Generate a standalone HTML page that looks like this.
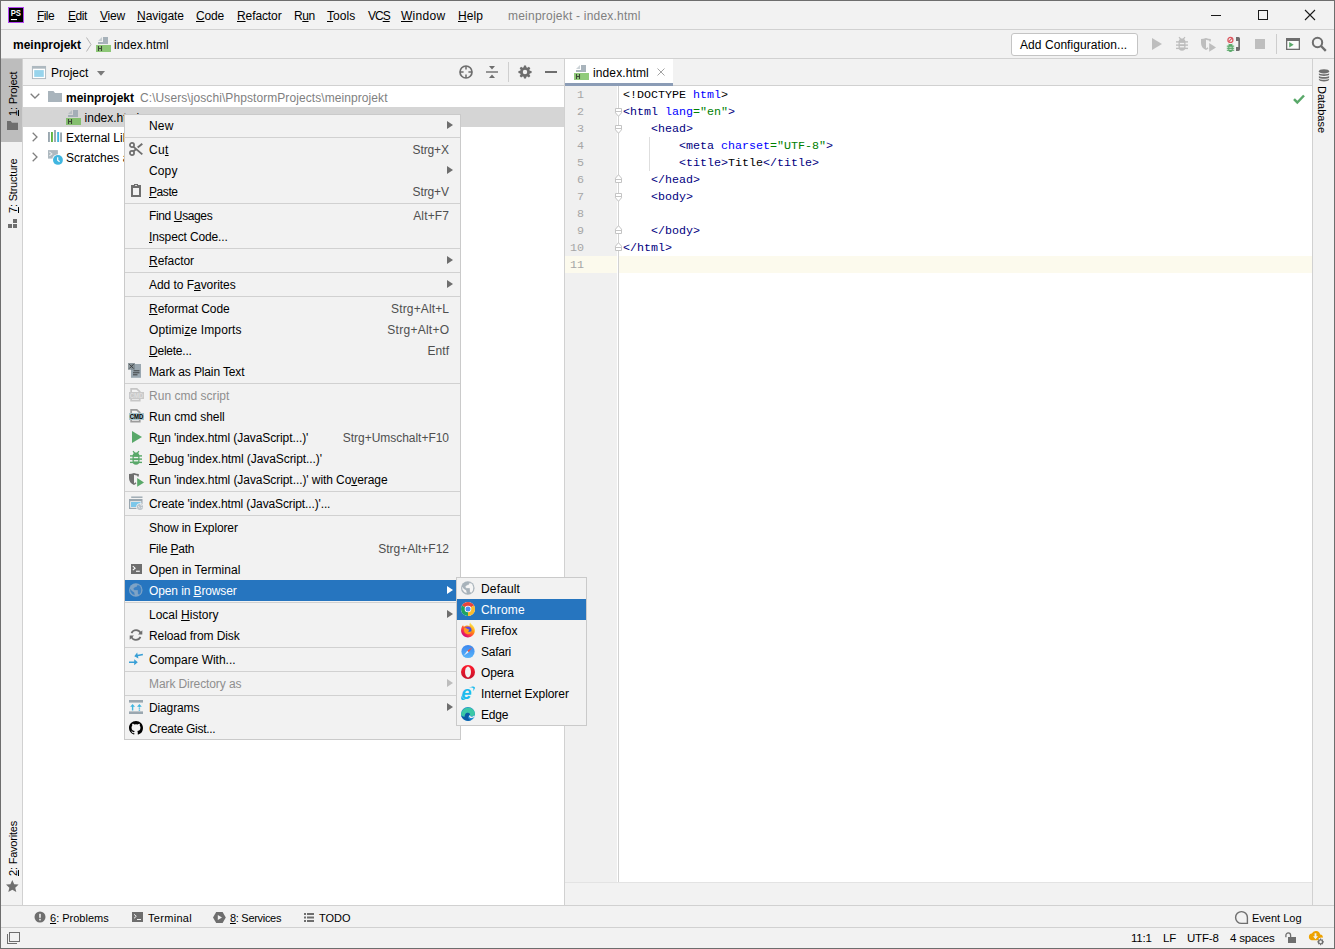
<!DOCTYPE html>
<html lang="en">
<head>
<meta charset="UTF-8">
<title>meinprojekt - index.html</title>
<style>
*{box-sizing:border-box;margin:0;padding:0}
html,body{width:1335px;height:949px;overflow:hidden;background:#f2f2f2}
body{font-family:"Liberation Sans",sans-serif;font-size:12px;color:#000;position:relative}
.a{position:absolute}
.t{position:absolute;white-space:pre;line-height:16px;height:16px}
u{text-decoration:underline;text-underline-offset:1px;text-decoration-thickness:1px}
svg{position:absolute;overflow:visible}
.hl{position:absolute;height:1px;background:#d1d1d1}
.vl{position:absolute;width:1px;background:#d1d1d1}
.menu{position:absolute;background:#f2f2f2;border:1px solid #cacaca}
.mi{position:absolute;left:0;height:21px;width:100%}
.mi .lb{position:absolute;left:24px;top:1px;letter-spacing:-.1px;line-height:21px;white-space:pre}
.mi .sc{position:absolute;right:11px;top:1px;letter-spacing:-.08px;line-height:21px;white-space:pre;color:#4f4f4f}
.mi.dis .lb{color:#8f8f8f}
.mi.sel{background:#2675bf}
.mi.sel .lb{color:#fff}
.sep{position:absolute;left:0;width:100%;height:1px;background:#d1d1d1}
.arr{position:absolute;right:7px;top:6px;width:0;height:0;border-left:6px solid #6e6e6e;border-top:4.5px solid transparent;border-bottom:4.5px solid transparent}
.mi.sel .arr{border-left-color:#fff}
.mi.dis .arr{border-left-color:#bdbdbd}
.mi svg{left:3px;top:2px}
.code{position:absolute;left:623px;font-family:"Liberation Mono",monospace;font-size:11.667px;line-height:17px;height:17px;white-space:pre;color:#000}
.ln{position:absolute;left:566px;width:26px;text-align:right;font-family:"Liberation Mono",monospace;font-size:11.667px;line-height:17px;height:17px;color:#a6a6a6}
.k{color:#000080}.at{color:#0000ff}.s{color:#008000}
.vt{position:absolute;white-space:pre;font-size:11px;line-height:14px;height:14px;transform-origin:0 0}
#frame{left:0;top:0;width:1335px;height:949px;border:1px solid #6e6e6e;z-index:50}
</style>
</head>
<body>
<svg width="16" height="16" viewBox="0 0 16 16" style="left:8px;top:7px"><rect width="16" height="16" fill="#b445f3"/><rect x="1" y="1" width="14" height="14" fill="#000"/><rect x="2.900" y="12" width="6.100" height="1.100" fill="#fff"/><text x="2.700" y="9.100" font-family="Liberation Sans" font-weight="700" font-size="8.600" textLength="10.300" lengthAdjust="spacingAndGlyphs" fill="#fff">PS</text></svg>
<div class="t" style="left:37px;top:8px;letter-spacing:-0.58px"><u>F</u>ile</div>
<div class="t" style="left:68px;top:8px;letter-spacing:-0.42px"><u>E</u>dit</div>
<div class="t" style="left:100px;top:8px;letter-spacing:-0.2px"><u>V</u>iew</div>
<div class="t" style="left:137px;top:8px;letter-spacing:-0.05px"><u>N</u>avigate</div>
<div class="t" style="left:196px;top:8px;letter-spacing:-0.17px"><u>C</u>ode</div>
<div class="t" style="left:237px;top:8px;letter-spacing:-0.1px"><u>R</u>efactor</div>
<div class="t" style="left:294px;top:8px;letter-spacing:-0.4px">R<u>u</u>n</div>
<div class="t" style="left:327px;top:8px;letter-spacing:0.08px"><u>T</u>ools</div>
<div class="t" style="left:368px;top:8px;letter-spacing:-1.0px">VC<u>S</u></div>
<div class="t" style="left:401px;top:8px;letter-spacing:0.27px"><u>W</u>indow</div>
<div class="t" style="left:458px;top:8px;letter-spacing:0.08px"><u>H</u>elp</div>
<div class="t" style="left:508px;top:8px;color:#7f7f7f;letter-spacing:.22px">meinprojekt - index.html</div>
<div class="a" style="left:1211px;top:15px;width:10px;height:1px;background:#1a1a1a;"></div>
<div class="a" style="left:1258px;top:10px;width:10px;height:10px;border:1px solid #1a1a1a"></div>
<svg width="10" height="10" viewBox="0 0 10 10" style="left:1305px;top:10px"><path d="M0 0L10 10M10 0L0 10" stroke="#1a1a1a" stroke-width="1.100"/></svg>
<div class="hl" style="left:1px;top:29px;width:1333px;background:#d1d1d1"></div>
<div class="t" style="left:13px;top:37px;font-weight:700">meinprojekt</div>
<svg width="6" height="15" viewBox="0 0 6 15" style="left:86px;top:37px"><path d="M.5 .5L5 7.500.5 14.500" fill="none" stroke="#b4b4b4" stroke-width="1"/></svg>
<svg width="16" height="16" viewBox="0 0 16 16" style="left:95px;top:36px"><path d="M8 1h5v7H3V6h5z" fill="#9aa7b0" opacity=".85"/><path d="M7 1v4H3z" fill="#9aa7b0" opacity=".5"/><rect x="1" y="9" width="15" height="7" fill="#62b543" opacity=".7"/><path d="M3.500 10v5M6.500 10v5M3.500 12.500h3" stroke="#231f20" stroke-opacity=".75" stroke-width="1.100" fill="none"/></svg>
<div class="t" style="left:114px;top:37px;">index.html</div>
<div class="a" style="left:1011px;top:33px;width:127px;height:23px;border:1px solid #c4c4c4;border-radius:3px;background:#fff"></div>
<div class="t" style="left:1020px;top:37px;letter-spacing:.06px">Add Configuration...</div>
<svg width="16" height="16" viewBox="0 0 16 16" style="left:1148px;top:36px"><polygon fill="#bebebe" points="4,2 14,8 4,14"/></svg>
<svg width="16" height="16" viewBox="0 0 16 16" style="left:1174px;top:36px"><g fill="#bebebe"><path d="M4.500 6.400a3.500 3.800 0 0 1 7 0v4.500a3.500 3.800 0 0 1-7 0z"/><rect x="2" y="5.200" width="12" height="1.400"/><rect x="2" y="8.400" width="12" height="1.400"/><rect x="2" y="11.700" width="12" height="1.400"/></g><path d="M5 1.200l2 2.300M11 1.200L9 3.500" stroke="#bebebe" stroke-width="1.200"/><rect x="5.800" y="6.900" width="4.400" height="1.300" fill="#f2f2f2"/><rect x="5.800" y="10.100" width="4.400" height="1.300" fill="#f2f2f2"/></svg>
<svg width="16" height="16" viewBox="0 0 16 16" style="left:1200px;top:36px"><g fill="#bebebe"><path d="M1 3Q3.500 3 6 2V14Q1 12 1 7z"/><path d="M6 2Q8.500 3 10.800 3V5.600H9.300V4.400Q7.500 4.300 6 3.700z"/><path d="M6 14Q7.500 13.400 8.400 12.300L7.400 11.300Q6.700 12.100 6 12.400z"/></g><polygon fill="#bebebe" points="9.200,7 16,11.400 9.200,15.700"/></svg>
<svg width="16" height="16" viewBox="0 0 16 16" style="left:1225px;top:36px"><path d="M11 1h2.500Q15 1 15 2.800V13.200Q15 15 13.500 15H11V11h2.300V5H11z" fill="#6e6e6e"/><circle cx="5.400" cy="3.900" r="2.500" fill="none" stroke="#db5860" stroke-width="1.300"/><path d="M3.700 5.600L7.100 2.200" stroke="#db5860" stroke-width="1.200"/><g fill="#59a869"><path d="M3.300 10.200a2.200 2.300 0 0 1 4.400 0v3.200a2.200 2.500 0 0 1-4.400 0z"/><rect x="1.800" y="9.600" width="7.400" height="1.100"/><rect x="1.800" y="11.700" width="7.400" height="1.100"/><rect x="1.800" y="13.700" width="7.400" height="1.100"/><path d="M3.600 7.800l1.300 1.500M7.400 7.800L6.100 9.300" stroke="#59a869" stroke-width="1"/></g><rect x="4.300" y="10.800" width="2.400" height=".8" fill="#f2f2f2"/><rect x="4.300" y="12.900" width="2.400" height=".8" fill="#f2f2f2"/></svg>
<div class="a" style="left:1255px;top:39px;width:10px;height:10px;background:#bebebe;"></div>
<div class="vl" style="left:1276px;top:34px;height:20px;background:#cdcdcd"></div>
<svg width="16" height="16" viewBox="0 0 16 16" style="left:1285px;top:36px"><path d="M1 2h14v12H1z" fill="#6e6e6e"/><rect x="2.300" y="5" width="11.400" height="7.700" fill="#fbfbfb"/><polygon points="4.200,6 8.700,8.800 4.200,11.600" fill="#59a869"/></svg>
<svg width="16" height="16" viewBox="0 0 16 16" style="left:1311px;top:36px"><circle cx="6.500" cy="6.500" r="4.700" fill="none" stroke="#6e6e6e" stroke-width="2"/><path d="M10 10l4.800 4.800" stroke="#6e6e6e" stroke-width="2.400"/></svg>
<div class="hl" style="left:1px;top:58px;width:1333px;background:#d1d1d1"></div>
<div class="a" style="left:1px;top:59px;width:21px;height:83px;background:#bdbdbd;"></div>
<div class="vl" style="left:22px;top:59px;height:846px;background:#d1d1d1"></div>
<div class="vt" style="left:6px;top:116px;font-size:11px;letter-spacing:-0.2px;transform:rotate(-90deg)"><u>1</u>: Project</div>
<svg width="11" height="9" viewBox="0 0 11 9" style="left:7px;top:121px"><path d="M0 0h3.700l1.300 1.700H11V9H0z" fill="#6e6e6e"/></svg>
<div class="vt" style="left:6px;top:213px;font-size:11px;letter-spacing:-0.2px;transform:rotate(-90deg)"><u>7</u>: Structure</div>
<svg width="9" height="9" viewBox="0 0 9 9" style="left:8px;top:219px"><g fill="#6e6e6e"><rect x="5" y="0" width="4" height="4"/><rect x="0" y="5" width="4" height="4"/><rect x="5" y="5" width="4" height="4"/></g></svg>
<div class="vt" style="left:6px;top:876px;font-size:11px;letter-spacing:-0.2px;transform:rotate(-90deg)"><u>2</u>: Favorites</div>
<svg width="12.6" height="12.6" viewBox="0 0 12 12" style="left:6.400px;top:880px"><path d="M6 0l1.800 4 4.200.400-3.200 2.900 1 4.200L6 9.300 2.200 11.500l1-4.200L0 4.400 4.200 4z" fill="#6e6e6e"/></svg>
<div class="a" style="left:23px;top:59px;width:541px;height:26px;background:#f2f2f2;"></div>
<div class="hl" style="left:23px;top:85px;width:541px;background:#d1d1d1"></div>
<div class="a" style="left:23px;top:86px;width:541px;height:819px;background:#fff;"></div>
<div class="a" style="left:23px;top:107px;width:541px;height:20px;background:#d5d5d5;"></div>
<div class="vl" style="left:564px;top:59px;height:846px;background:#d1d1d1"></div>
<svg width="16" height="16" viewBox="0 0 16 16" style="left:31px;top:64px"><rect x="1.400" y="2.400" width="13.200" height="12.200" fill="#fff" stroke="#a9b4bc" stroke-width=".9"/><rect x="1" y="2" width="14" height="2.700" fill="#aeb9c0"/><rect x="3.200" y="6.100" width="9.600" height="6.800" fill="#98d4ec"/></svg>
<div class="t" style="left:51px;top:65px;">Project</div>
<svg width="8" height="5" viewBox="0 0 8 5" style="left:97px;top:71px"><path d="M0 0h8L4 4.700z" fill="#7a7a7a"/></svg>
<svg width="16" height="16" viewBox="0 0 16 16" style="left:458px;top:64px"><circle cx="8" cy="8" r="6" fill="none" stroke="#6e6e6e" stroke-width="1.700"/><path d="M8 2v3.600M8 10.400v3.600M2 8h3.600M10.400 8h3.600" stroke="#6e6e6e" stroke-width="1.500"/></svg>
<svg width="16" height="16" viewBox="0 0 16 16" style="left:484px;top:64px"><path d="M2 7.300h12v1.400H2z" fill="#6e6e6e"/><path d="M5 2h6L8 5.500zM5 14h6L8 10.500z" fill="#6e6e6e"/></svg>
<div class="vl" style="left:508px;top:62px;height:20px;background:#cfcfcf"></div>
<svg width="16" height="16" viewBox="0 0 16 16" style="left:517px;top:64px"><path fill="#6e6e6e" fill-rule="evenodd" d="M6.900 1.500h2.200l.4 1.900 1.100.5 1.600-1.100 1.600 1.600-1.100 1.600.5 1.100 1.900.4v2.200l-1.900.4-.5 1.100 1.100 1.600-1.600 1.600-1.600-1.100-1.100.5-.4 1.900H6.900l-.4-1.900-1.100-.5-1.600 1.100-1.600-1.600 1.100-1.600-.5-1.100-1.900-.4V7.500l1.900-.4.5-1.100-1.100-1.600 1.600-1.600 1.600 1.100 1.100-.5zM8 6.200a2.400 2.400 0 1 0 0 4.800 2.400 2.400 0 0 0 0-4.800z" transform="translate(.6 .1) scale(.925)"/></svg>
<div class="a" style="left:545px;top:71px;width:12px;height:2px;background:#6e6e6e;"></div>
<svg width="10" height="6" viewBox="0 0 10 6" style="left:29.5px;top:93.4px"><path d="M.700 .700L5 5l4.300-4.300" fill="none" stroke="#7f7f7f" stroke-width="1.300"/></svg>
<svg width="16" height="16" viewBox="0 0 16 16" style="left:47px;top:89px"><path d="M1 2h5.500l1.500 2H15v9H1z" fill="#9aa7b0" opacity=".85"/></svg>
<div class="t" style="left:66px;top:90px;font-weight:700">meinprojekt</div>
<div class="t" style="left:140px;top:90px;color:#7f7f7f;letter-spacing:.08px">C:\Users\joschi\PhpstormProjects\meinprojekt</div>
<svg width="16" height="16" viewBox="0 0 16 16" style="left:65px;top:109px"><path d="M8 1h5v7H3V6h5z" fill="#9aa7b0" opacity=".85"/><path d="M7 1v4H3z" fill="#9aa7b0" opacity=".5"/><rect x="1" y="9" width="15" height="7" fill="#62b543" opacity=".7"/><path d="M3.500 10v5M6.500 10v5M3.500 12.500h3" stroke="#231f20" stroke-opacity=".75" stroke-width="1.100" fill="none"/></svg>
<div class="t" style="left:84.6px;top:110px;">index.html</div>
<svg width="6" height="10" viewBox="0 0 6 10" style="left:31.6px;top:131.6px"><path d="M.700 .700L5 5 .700 9.300" fill="none" stroke="#7f7f7f" stroke-width="1.300"/></svg>
<svg width="16" height="16" viewBox="0 0 16 16" style="left:48px;top:127px"><rect x="0" y="5" width="1.900" height="10" fill="#9aa7b0"/><rect x="3" y="5" width="1.900" height="10" fill="#62b543"/><rect x="6.050" y="3" width="1.900" height="12" fill="#9aa7b0"/><rect x="9.200" y="5" width="1.900" height="10" fill="#40b6e0"/><rect x="12.100" y="5.500" width="1.900" height="9.500" fill="#9aa7b0"/></svg>
<div class="t" style="left:66px;top:130px;">External Libraries</div>
<svg width="6" height="10" viewBox="0 0 6 10" style="left:31.6px;top:151.6px"><path d="M.700 .700L5 5 .700 9.300" fill="none" stroke="#7f7f7f" stroke-width="1.300"/></svg>
<svg width="16" height="16" viewBox="0 0 16 16" style="left:48px;top:148px"><rect x="0" y="2.100" width="9.900" height="8.500" fill="#9aa7b0" opacity=".8"/><path d="M1.400 3.900l2.500 2-2.500 2" stroke="#fff" stroke-opacity=".75" stroke-width="1.100" fill="none"/><circle cx="9.950" cy="11.900" r="5.700" fill="#fff"/><circle cx="9.950" cy="11.900" r="4.950" fill="#40b6e0"/><path d="M9.700 9.200v3l1.900 1.500" stroke="#fff" stroke-width="1.200" fill="none"/></svg>
<div class="t" style="left:66px;top:150px;">Scratches and Consoles</div>
<div class="a" style="left:565px;top:59px;width:747px;height:26px;background:#f2f2f2;"></div>
<div class="a" style="left:565px;top:59px;width:108px;height:24px;background:#fff;"></div>
<div class="a" style="left:565px;top:83px;width:108px;height:3px;background:#8b9cb6;"></div>
<div class="hl" style="left:673px;top:85px;width:639px;background:#d1d1d1"></div>
<div class="a" style="left:565px;top:86px;width:52px;height:796px;background:#f0f0f0;"></div>
<div class="a" style="left:617px;top:86px;width:1px;height:796px;background:#fff;"></div>
<div class="vl" style="left:618px;top:86px;height:796px;background:#d2d2d2"></div>
<div class="a" style="left:619px;top:86px;width:693px;height:796px;background:#fff;"></div>
<div class="a" style="left:565px;top:256px;width:52px;height:17px;background:#fcfaed;"></div>
<div class="a" style="left:619px;top:256px;width:693px;height:17px;background:#fcfaed;"></div>
<div class="hl" style="left:565px;top:882px;width:747px;background:#e3e3e3"></div>
<svg width="16" height="16" viewBox="0 0 16 16" style="left:573px;top:64px"><path d="M8 1h5v7H3V6h5z" fill="#9aa7b0" opacity=".85"/><path d="M7 1v4H3z" fill="#9aa7b0" opacity=".5"/><rect x="1" y="9" width="15" height="7" fill="#62b543" opacity=".7"/><path d="M3.500 10v5M6.500 10v5M3.500 12.500h3" stroke="#231f20" stroke-opacity=".75" stroke-width="1.100" fill="none"/></svg>
<div class="t" style="left:593px;top:65px;letter-spacing:.12px">index.html</div>
<svg width="8" height="8" viewBox="0 0 8 8" style="left:657px;top:68px"><path d="M.500 .500l7 7M7.500 .500l-7 7" stroke="#a3a3a3" stroke-width="1"/></svg>
<div class="ln" style="top:87px;left:566px;width:18px">1</div>
<div class="code" style="top:87px">&lt;!DOCTYPE <span class="at">html</span>&gt;</div>
<div class="ln" style="top:104px;left:566px;width:18px">2</div>
<div class="code" style="top:104px"><span class="k">&lt;html </span><span class="at">lang</span><span class="s">="en"</span><span class="k">&gt;</span></div>
<div class="ln" style="top:121px;left:566px;width:18px">3</div>
<div class="code" style="top:121px">    <span class="k">&lt;head&gt;</span></div>
<div class="ln" style="top:138px;left:566px;width:18px">4</div>
<div class="code" style="top:138px">        <span class="k">&lt;meta </span><span class="at">charset</span><span class="s">="UTF-8"</span><span class="k">&gt;</span></div>
<div class="ln" style="top:155px;left:566px;width:18px">5</div>
<div class="code" style="top:155px">        <span class="k">&lt;title&gt;</span>Title<span class="k">&lt;/title&gt;</span></div>
<div class="ln" style="top:172px;left:566px;width:18px">6</div>
<div class="code" style="top:172px">    <span class="k">&lt;/head&gt;</span></div>
<div class="ln" style="top:189px;left:566px;width:18px">7</div>
<div class="code" style="top:189px">    <span class="k">&lt;body&gt;</span></div>
<div class="ln" style="top:206px;left:566px;width:18px">8</div>
<div class="ln" style="top:223px;left:566px;width:18px">9</div>
<div class="code" style="top:223px">    <span class="k">&lt;/body&gt;</span></div>
<div class="ln" style="top:240px;left:566px;width:18px">10</div>
<div class="code" style="top:240px"><span class="k">&lt;/html&gt;</span></div>
<div class="ln" style="top:257px;left:566px;width:18px">11</div>
<div class="vl" style="left:649px;top:137px;height:34px;background:#dedede"></div>
<svg width="7" height="9" viewBox="0 0 7 9" style="left:615px;top:108px"><path d="M.500 .500h6v4.300L3.500 8.300 .500 4.800z" fill="#fff" stroke="#c4c4c4" stroke-width="1"/><path d="M.500 3.500h6" stroke="#c4c4c4" stroke-width="1"/></svg>
<svg width="7" height="9" viewBox="0 0 7 9" style="left:615px;top:125px"><path d="M.500 .500h6v4.300L3.500 8.300 .500 4.800z" fill="#fff" stroke="#c4c4c4" stroke-width="1"/><path d="M.500 3.500h6" stroke="#c4c4c4" stroke-width="1"/></svg>
<svg width="7" height="9" viewBox="0 0 7 9" style="left:615px;top:193px"><path d="M.500 .500h6v4.300L3.500 8.300 .500 4.800z" fill="#fff" stroke="#c4c4c4" stroke-width="1"/><path d="M.500 3.500h6" stroke="#c4c4c4" stroke-width="1"/></svg>
<svg width="7" height="9" viewBox="0 0 7 9" style="left:615px;top:174px"><path d="M.500 8.500h6V4.200L3.500 .700 .500 4.200z" fill="#fff" stroke="#c4c4c4" stroke-width="1"/><path d="M.500 5.500h6" stroke="#c4c4c4" stroke-width="1"/></svg>
<svg width="7" height="9" viewBox="0 0 7 9" style="left:615px;top:225px"><path d="M.500 8.500h6V4.200L3.500 .700 .500 4.200z" fill="#fff" stroke="#c4c4c4" stroke-width="1"/><path d="M.500 5.500h6" stroke="#c4c4c4" stroke-width="1"/></svg>
<svg width="7" height="9" viewBox="0 0 7 9" style="left:615px;top:242px"><path d="M.500 8.500h6V4.200L3.500 .700 .500 4.200z" fill="#fff" stroke="#c4c4c4" stroke-width="1"/><path d="M.500 5.500h6" stroke="#c4c4c4" stroke-width="1"/></svg>
<svg width="12" height="10" viewBox="0 0 12 10" style="left:1293px;top:93.500px"><path d="M1 5.200l3.300 3.300L11 1.500" fill="none" stroke="#59a869" stroke-width="2.500"/></svg>
<div class="vl" style="left:1312px;top:59px;height:846px;background:#d1d1d1"></div>
<svg width="12" height="13" viewBox="0 0 12 14" style="left:1317.6px;top:69px"><g fill="#6e6e6e"><ellipse cx="6" cy="2.500" rx="5.500" ry="2.300"/><path d="M.500 4.500c1 1.600 10 1.600 11 0v1.800c-1 1.600-10 1.600-11 0z"/><path d="M.500 7.500c1 1.600 10 1.600 11 0v1.800c-1 1.600-10 1.600-11 0z"/><path d="M.500 10.500c1 1.600 10 1.600 11 0v1.200c-1 2.400-10 2.400-11 0z"/></g></svg>
<div class="vt" style="left:1329px;top:86px;font-size:11px;letter-spacing:0px;transform:rotate(90deg)">Database</div>
<div class="hl" style="left:1px;top:905px;width:1333px;background:#d1d1d1"></div>
<div class="hl" style="left:1px;top:927px;width:1333px;background:#d1d1d1"></div>
<svg width="12" height="12" viewBox="0 0 12 12" style="left:34px;top:911px"><circle cx="6" cy="6" r="5.500" fill="#6e6e6e"/><rect x="5.200" y="2.800" width="1.600" height="4" fill="#f2f2f2"/><rect x="5.200" y="7.800" width="1.600" height="1.600" fill="#f2f2f2"/></svg>
<div class="t" style="left:50px;top:910px;font-size:11px"><u>6</u>: Problems</div>
<svg width="11" height="10" viewBox="0 0 11 10" style="left:132px;top:912px"><rect x="0" y="0" width="11" height="10" fill="#6e6e6e"/><path d="M2 2.300l2.300 2-2.300 2" stroke="#f2f2f2" stroke-width="1" fill="none"/><rect x="5" y="7" width="4" height="1" fill="#f2f2f2"/></svg>
<div class="t" style="left:148px;top:910px;font-size:11px;letter-spacing:.3px">Terminal</div>
<svg width="13" height="11" viewBox="0 0 13 11" style="left:213px;top:912px"><path d="M3.200 0h6.400L12.800 5.500 9.600 11H3.200L0 5.500z" fill="#6e6e6e"/><polygon points="4.800,3 9,5.500 4.800,8" fill="#f2f2f2"/></svg>
<div class="t" style="left:230px;top:910px;font-size:11px;letter-spacing:-.3px"><u>8</u>: Services</div>
<svg width="10" height="9" viewBox="0 0 10 9" style="left:304px;top:912.600px"><g fill="#6e6e6e"><rect x="0" y="0" width="2" height="2"/><rect x="3" y="0" width="7" height="2"/><rect x="0" y="3.500" width="2" height="2"/><rect x="3" y="3.500" width="7" height="2"/><rect x="0" y="7" width="2" height="2"/><rect x="3" y="7" width="7" height="2"/></g></svg>
<div class="t" style="left:319px;top:910px;font-size:11px">TODO</div>
<svg width="13" height="13" viewBox="0 0 13 13" style="left:1235px;top:911px"><path d="M6.500 .600A5.900 5.900 0 1 0 6.500 12.400H12.400V6.500A5.900 5.900 0 0 0 6.500 .600z" fill="none" stroke="#6e6e6e" stroke-width="1.400"/></svg>
<div class="t" style="left:1252px;top:910px;font-size:11px">Event Log</div>
<div class="a" style="left:9px;top:932px;width:11px;height:10px;border:1px solid #6e6e6e"></div>
<div class="a" style="left:7px;top:934px;width:10px;height:10px;border-left:1px solid #6e6e6e;border-bottom:1px solid #6e6e6e"></div>
<div class="t" style="left:1131px;top:930px;font-size:11.5px;letter-spacing:-.2px">11:1</div>
<div class="t" style="left:1163px;top:930px;font-size:11.5px;letter-spacing:-.2px">LF</div>
<div class="t" style="left:1187px;top:930px;font-size:11.5px;letter-spacing:-.2px">UTF-8</div>
<div class="t" style="left:1230px;top:930px;font-size:11.5px;letter-spacing:-.2px">4 spaces</div>
<svg width="13" height="13" viewBox="0 0 13 13" style="left:1285px;top:931px"><rect x="3" y="6" width="8" height="6" fill="#6e6e6e"/><path d="M.900 6.200V4.300A2.350 2.350 0 0 1 5.600 4.300V6.200" fill="none" stroke="#6e6e6e" stroke-width="1.300"/></svg>
<svg width="17" height="16" viewBox="0 0 17 16" style="left:1308px;top:930px"><path d="M3.600 10.300a3.400 3.400 0 0 1 .200-6.700 4.400 4.400 0 0 1 8.300.900 2.900 2.900 0 0 1 2.700 3.300l-1.500-.300-2.500.800-.500 2z" fill="#eda200"/><path d="M6.600 3.200h1.800v3h1.600L7.500 9.200 5 6.200h1.600z" fill="#f2f2f2"/><g transform="translate(12.600 11.900)"><circle r="2" fill="none" stroke="#6e6e6e" stroke-width="1.200"/><path d="M0-3.300V3.300M-3.300 0H3.300M-2.300-2.300L2.300 2.300M-2.300 2.300L2.300-2.300" stroke="#6e6e6e" stroke-width="1.100"/><circle r="1.300" fill="#f2f2f2"/></g></svg>
<div class="menu" style="left:124px;top:114px;width:337px;height:626px"><div class="mi " style="top:0px"><span class="lb" style="letter-spacing:0.161px">New</span><span class="arr"></span></div><div class="sep" style="top:22px"></div><div class="mi " style="top:24px"><svg width="16" height="16" viewBox="0 0 16 16" style=""><g fill="none" stroke="#6e6e6e" stroke-width="1.7"><circle cx="4" cy="4" r="2.1"/><circle cx="4" cy="12" r="2.1"/></g><path d="M5.3 5.6L14.3 13.4M5.3 10.4L8.2 8M9.7 6.5L14.3 2.700" stroke="#6e6e6e" stroke-width="1.9" fill="none"/></svg><span class="lb" style="letter-spacing:0.304px">Cu<u>t</u></span><span class="sc" style="letter-spacing:-0.122px;margin-right:0.122px">Strg+X</span></div><div class="mi " style="top:45px"><span class="lb" style="letter-spacing:0.121px">Copy</span><span class="arr"></span></div><div class="mi " style="top:66px"><svg width="16" height="16" viewBox="0 0 16 16" style=""><path fill="#6e6e6e" fill-rule="evenodd" d="M3 2h3V1h4v1h3v12H3zM5 5v7h6V5z"/><ellipse cx="8" cy="2.5" rx="1.1" ry=".55" fill="#f2f2f2"/></svg><span class="lb" style="letter-spacing:-0.437px"><u>P</u>aste</span><span class="sc" style="letter-spacing:-0.122px;margin-right:0.122px">Strg+V</span></div><div class="sep" style="top:88px"></div><div class="mi " style="top:90px"><span class="lb" style="letter-spacing:-0.37px">Find <u>U</u>sages</span><span class="sc" style="letter-spacing:0.164px;margin-right:-0.164px">Alt+F7</span></div><div class="mi " style="top:111px"><span class="lb" style="letter-spacing:-0.141px"><u>I</u>nspect Code...</span></div><div class="sep" style="top:133px"></div><div class="mi " style="top:135px"><span class="lb" style="letter-spacing:-0.045px"><u>R</u>efactor</span><span class="arr"></span></div><div class="sep" style="top:157px"></div><div class="mi " style="top:159px"><span class="lb" style="letter-spacing:-0.048px">Add to F<u>a</u>vorites</span><span class="arr"></span></div><div class="sep" style="top:181px"></div><div class="mi " style="top:183px"><span class="lb" style="letter-spacing:-0.052px"><u>R</u>eformat Code</span><span class="sc" style="letter-spacing:0.13px;margin-right:-0.13px">Strg+Alt+L</span></div><div class="mi " style="top:204px"><span class="lb" style="letter-spacing:0.12px">Optimi<u>z</u>e Imports</span><span class="sc" style="letter-spacing:0.252px;margin-right:-0.252px">Strg+Alt+O</span></div><div class="mi " style="top:225px"><span class="lb" style="letter-spacing:-0.234px"><u>D</u>elete...</span><span class="sc" style="letter-spacing:0.06px;margin-right:-0.06px">Entf</span></div><div class="mi " style="top:246px"><svg width="16" height="16" viewBox="0 0 16 16" style=""><rect x="3" y="1" width="10" height="13.800" fill="#9aa7b0"/><rect x="0" y="0" width="7" height="6.800" fill="#7f8b91" opacity=".85"/><path d="M1.300 1.200l4.300 4.300M5.600 1.200L1.300 5.500" stroke="#3c3f41" stroke-width="1"/><path d="M5.500 7.800h6M5 9.800h6.500M5 11.800h4.500" stroke="#3c3f41" stroke-width="1"/></svg><span class="lb" style="letter-spacing:-0.135px">Mark as Plain Text</span></div><div class="sep" style="top:268px"></div><div class="mi dis" style="top:270px"><svg width="16" height="16" viewBox="0 0 16 16" style=""><path d="M2.300 5V1h6.800L12.600 4.200V5H10.900V4.900L8.400 2.700H4V5z" fill="#c6c6c6"/><path d="M2.300 12H4v.800h6.900V12h1.700v2.500H2.300z" fill="#c6c6c6"/><rect x="1" y="5" width="15" height="7" fill="#c8c8c8"/><text x="1.700" y="10.900" font-family="Liberation Sans" font-weight="700" font-size="6.600" textLength="13.600" lengthAdjust="spacingAndGlyphs" fill="#dedede">CMD</text></svg><span class="lb" style="letter-spacing:0.026px">Run cmd script</span></div><div class="mi " style="top:291px"><svg width="16" height="16" viewBox="0 0 16 16" style=""><path d="M2.300 5V1h6.800L12.600 4.200V5H10.900V4.900L8.400 2.700H4V5z" fill="#9c9c9c"/><path d="M2.300 12H4v.800h6.900V12h1.700v2.500H2.300z" fill="#9c9c9c"/><rect x="1" y="5" width="15" height="7" fill="#a9c6cd"/><text x="1.700" y="10.900" font-family="Liberation Sans" font-weight="700" font-size="6.600" textLength="13.600" lengthAdjust="spacingAndGlyphs" fill="#000">CMD</text></svg><span class="lb" style="letter-spacing:-0.025px">Run cmd shell</span></div><div class="mi " style="top:312px"><svg width="16" height="16" viewBox="0 0 16 16" style=""><polygon fill="#59a869" points="4,2 14,8 4,14"/></svg><span class="lb" style="letter-spacing:-0.084px">R<u>u</u>n 'index.html (JavaScript...)'</span><span class="sc" style="letter-spacing:-0.031px;margin-right:0.031px">Strg+Umschalt+F10</span></div><div class="mi " style="top:333px"><svg width="16" height="16" viewBox="0 0 16 16" style=""><g fill="#59a869"><path d="M4.500 6.400a3.500 3.800 0 0 1 7 0v4.500a3.500 3.800 0 0 1-7 0z"/><rect x="2" y="5.200" width="12" height="1.400"/><rect x="2" y="8.400" width="12" height="1.400"/><rect x="2" y="11.700" width="12" height="1.400"/></g><path d="M5 1.200l2 2.300M11 1.200L9 3.500" stroke="#59a869" stroke-width="1.200"/><rect x="5.800" y="6.900" width="4.400" height="1.300" fill="#f2f2f2"/><rect x="5.800" y="10.100" width="4.400" height="1.300" fill="#f2f2f2"/></svg><span class="lb" style="letter-spacing:-0.068px"><u>D</u>ebug 'index.html (JavaScript...)'</span></div><div class="mi " style="top:354px"><svg width="16" height="16" viewBox="0 0 16 16" style=""><g fill="#6e6e6e"><path d="M1 3Q3.500 3 6 2V14Q1 12 1 7z"/><path d="M6 2Q8.500 3 10.800 3V5.600H9.300V4.400Q7.500 4.300 6 3.700z"/><path d="M6 14Q7.500 13.400 8.400 12.300L7.400 11.300Q6.700 12.100 6 12.400z"/></g><polygon fill="#59a869" points="9.200,7 16,11.400 9.200,15.700"/></svg><span class="lb" style="letter-spacing:-0.076px">Run 'index.html (JavaScript...)' with Co<u>v</u>erage</span></div><div class="sep" style="top:376px"></div><div class="mi " style="top:378px"><svg width="16" height="16" viewBox="0 0 16 16" style=""><path d="M3.2 1.5h11.3v1.4H3.2z" fill="#9aa7b0"/><path d="M1 4h13.5v10H1z" fill="#9aa7b0"/><rect x="2.2" y="6.2" width="11.1" height="6.6" fill="#f2f2f2"/><rect x="3" y="7" width="9.5" height="5" fill="#7cc7ea"/><circle cx="12" cy="12" r="3.8" fill="#f2f2f2"/><circle cx="12" cy="12" r="3.1" fill="#b9c2c9"/><path d="M10 11.2c1 .3 1.4 1 1.2 2.2M12.3 9.3c.3 1 .9 1.2 1.9.9M12.8 13.1c.4-.5.9-.6 1.6-.3" stroke="#f2f2f2" stroke-width=".9" fill="none"/></svg><span class="lb" style="letter-spacing:-0.123px">Create 'index.html (JavaScript...)'...</span></div><div class="sep" style="top:400px"></div><div class="mi " style="top:402px"><span class="lb" style="letter-spacing:-0.12px">Show in Explorer</span></div><div class="mi " style="top:423px"><span class="lb" style="letter-spacing:-0.229px">File <u>P</u>ath</span><span class="sc" style="letter-spacing:0.007px;margin-right:-0.007px">Strg+Alt+F12</span></div><div class="mi " style="top:444px"><svg width="16" height="16" viewBox="0 0 16 16" style=""><rect x="3" y="3" width="11" height="10" fill="#6e6e6e"/><path d="M4.800 5.200l2.300 2-2.300 2" stroke="#fff" stroke-width="1.100" fill="none"/><rect x="8" y="9.700" width="3.800" height="1.100" fill="#fff"/></svg><span class="lb" style="letter-spacing:0.056px">Open in Terminal</span></div><div class="mi sel" style="top:465px"><svg width="16" height="16" viewBox="0 0 16 16" style=""><circle cx="7.800" cy="8" r="6.800" fill="#b4c0ca" opacity="0.62"/><path d="M9.700 2.900L12 3.900 13.200 7 12.900 10.400 11.400 12.500 10.100 12.100 9.900 8.100H6.500L5.400 7 6.900 5.300 8.600 4.900zM2.200 7L3.600 8.800 6.100 10.600 6.500 13.100 4.300 12.100 2.500 9.600z" fill="#3b80c3" stroke="#3b80c3" stroke-width=".25" stroke-linejoin="round"/></svg><span class="lb" style="letter-spacing:-0.112px">Open in <u>B</u>rowser</span><span class="arr"></span></div><div class="sep" style="top:487px"></div><div class="mi " style="top:489px"><span class="lb" style="letter-spacing:0.003px">Local <u>H</u>istory</span><span class="arr"></span></div><div class="mi " style="top:510px"><svg width="16" height="16" viewBox="0 0 16 16" style=""><g fill="none" stroke="#6e6e6e" stroke-width="1.700"><path d="M12.700 6.300A5 5 0 0 0 3.500 6.200"/><path d="M3.300 9.700a5 5 0 0 0 9.200.100"/></g><path fill="#6e6e6e" d="M14.300 3.200v4.300H10zM1.700 12.800V8.500H6z"/></svg><span class="lb" style="letter-spacing:-0.089px">Reload from Disk</span></div><div class="sep" style="top:532px"></div><div class="mi " style="top:534px"><svg width="16" height="16" viewBox="0 0 16 16" style=""><g fill="#389fd6"><path d="M1 10.2h5.2V8l3.6 3-3.6 3v-2.2H1z" transform="translate(0 .2)"/><path d="M15 5.3H9.8V7.5L6.2 4.5 9.8 1.5v2.2H15z" transform="rotate(-12 10 4.5)"/></g></svg><span class="lb" style="letter-spacing:-0.007px">Compare With...</span></div><div class="sep" style="top:556px"></div><div class="mi dis" style="top:558px"><span class="lb" style="letter-spacing:-0.095px">Mark Directory as</span><span class="arr"></span></div><div class="sep" style="top:580px"></div><div class="mi " style="top:582px"><svg width="16" height="16" viewBox="0 0 16 16" style=""><rect x="1" y="1" width="14" height="2.6" fill="#9aa7b0"/><rect x="1" y="12.4" width="14" height="2.6" fill="#9aa7b0"/><path d="M4.6 5L7 7.8H5.3v3.8H3.9V7.8H2.2z" fill="#40b6e0"/><path d="M11.4 5l2.4 2.8h-1.7v.7h-1.4v-.7H9z M10.7 9.2h1.4v1h-1.4z M10.7 10.8h1.4v.9h-1.4z" fill="#40b6e0"/></svg><span class="lb" style="letter-spacing:-0.132px">Diagrams</span><span class="arr"></span></div><div class="mi " style="top:603px"><svg width="16" height="16" viewBox="0 0 16 16" style=""><path fill="#000" fill-rule="evenodd" d="M8 1C4.1 1 1 4.1 1 8c0 3.1 2 5.7 4.8 6.6.35.07.48-.15.48-.33v-1.2c-1.95.42-2.36-.94-2.36-.94-.32-.8-.78-1.02-.78-1.02-.64-.43.05-.42.05-.42.7.05 1.07.72 1.07.72.62 1.07 1.64.76 2.04.58.06-.45.24-.76.44-.93-1.55-.18-3.19-.78-3.19-3.46 0-.76.27-1.39.72-1.88-.07-.18-.31-.89.07-1.85 0 0 .59-.19 1.92.72a6.7 6.7 0 0 1 3.5 0c1.33-.9 1.92-.72 1.92-.72.38.96.14 1.67.07 1.85.45.49.72 1.12.72 1.88 0 2.69-1.64 3.28-3.2 3.45.25.22.48.65.48 1.3v1.93c0 .19.13.41.48.34A7 7 0 0 0 15 8c0-3.9-3.1-7-7-7z"/></svg><span class="lb" style="letter-spacing:-0.321px">Create Gist...</span></div></div>
<div class="menu" style="left:456px;top:577px;width:131px;height:149px"><div class="mi " style="top:0px"><svg width="16" height="16" viewBox="0 0 16 16" style=""><circle cx="7.800" cy="8" r="6.800" fill="#9aa7b0" opacity="0.85"/><path d="M9.700 2.900L12 3.900 13.200 7 12.900 10.400 11.400 12.500 10.100 12.100 9.900 8.100H6.500L5.400 7 6.900 5.300 8.600 4.900zM2.200 7L3.600 8.800 6.100 10.600 6.500 13.100 4.300 12.100 2.500 9.600z" fill="#f6f6f6" stroke="#f6f6f6" stroke-width=".25" stroke-linejoin="round"/></svg><span class="lb" style="letter-spacing:0.153px">Default</span></div><div class="mi sel" style="top:21px"><svg width="16" height="16" viewBox="0 0 16 16" style=""><circle cx="8" cy="8" r="7" fill="#fff"/><path d="M8 8L1.94 4.5A7 7 0 0 1 14.06 4.5z" fill="#e8453c"/><path d="M8 8L14.06 4.5A7 7 0 0 1 8 15z" fill="#f9bb2d"/><path d="M8 8L8 15A7 7 0 0 1 1.94 4.5z" fill="#1da462"/><circle cx="8" cy="8" r="3.3" fill="#fff"/><circle cx="8" cy="8" r="2.5" fill="#4e8df5"/></svg><span class="lb" style="letter-spacing:0.185px">Chrome</span></div><div class="mi " style="top:42px"><svg width="16" height="16" viewBox="0 0 16 16" style=""><defs><linearGradient id="ffg" x1=".85" y1=".1" x2=".2" y2=".95"><stop offset="0" stop-color="#fff05a"/><stop offset=".35" stop-color="#ff980e"/><stop offset=".7" stop-color="#ff3647"/><stop offset="1" stop-color="#c60084"/></linearGradient><linearGradient id="ffb" x1=".5" y1="0" x2=".5" y2="1"><stop offset="0" stop-color="#7542e5"/><stop offset="1" stop-color="#0060df"/></linearGradient></defs><path d="M10.300 .500C10.500 2 12 2.500 13.300 4.200A6.900 6.900 0 1 1 1.400 6.300C1.600 5 2.300 3.800 3.200 3.200C3.200 4 3.500 4.500 4 4.800C5.500 3.300 8 3 9.800 4C9.300 2.800 9.500 1.500 10.300 .500z" fill="url(#ffg)"/><circle cx="8" cy="7.900" r="3.500" fill="url(#ffb)"/><path d="M4.200 6.200C5.300 5.700 6.600 6 7.300 6.800C8 7.600 9 7.200 9.600 7.800C9 8.200 8.800 9 8 9.200C9.200 10.200 10.800 9.800 11.600 8.800C11.500 11 9.800 12.300 7.800 12.200C5.500 12.100 3.800 10.200 4 8C4 7.300 4 6.800 4.200 6.200z" fill="#ff9a1f"/></svg><span class="lb" style="letter-spacing:-0.041px">Firefox</span></div><div class="mi " style="top:63px"><svg width="16" height="16" viewBox="0 0 16 16" style=""><defs><linearGradient id="sfg" x1=".5" y1="0" x2=".5" y2="1"><stop offset="0" stop-color="#3b86ee"/><stop offset="1" stop-color="#58b4fa"/></linearGradient></defs><circle cx="8" cy="8.500" r="6.600" fill="url(#sfg)"/><path d="M12.300 4.200L8.700 9.200 7.300 7.800z" fill="#f4523b"/><path d="M3.700 12.800L7.300 7.800l1.400 1.400z" fill="#e8eef5"/></svg><span class="lb" style="letter-spacing:-0.243px">Safari</span></div><div class="mi " style="top:84px"><svg width="16" height="16" viewBox="0 0 16 16" style=""><defs><linearGradient id="opg" x1=".5" y1="0" x2=".5" y2="1"><stop offset="0" stop-color="#ff1b2d"/><stop offset="1" stop-color="#c5122b"/></linearGradient></defs><ellipse cx="8" cy="8" rx="7" ry="6.900" fill="url(#opg)"/><ellipse cx="8" cy="8" rx="3" ry="5.400" fill="#f2f2f2"/></svg><span class="lb" style="letter-spacing:-0.112px">Opera</span></div><div class="mi " style="top:105px"><svg width="16" height="16" viewBox="0 0 16 16" style=""><text x="1.600" y="13.800" font-family="Liberation Sans" font-weight="700" font-style="italic" font-size="18" fill="#1ebbee">e</text><path d="M14.800 2.200C13.800 .800 11.300 1.400 9 2.800 11 2.200 12.800 2.300 13.300 3.300 13.700 4 13.400 5 12.800 6.100 14.200 4.800 15.500 3.200 14.800 2.200zM1.600 14.600C.400 13.200 1.800 10.300 4 7.800 2.800 9.800 2 12 2.900 13.100 3.700 14 5.400 13.600 7.200 12.700 5.200 14.400 2.700 15.900 1.600 14.600z" fill="#1ebbee"/></svg><span class="lb" style="letter-spacing:-0.048px">Internet Explorer</span></div><div class="mi " style="top:126px"><svg width="16" height="16" viewBox="0 0 16 16" style=""><circle cx="8" cy="8" r="7" fill="#1b8ad3"/><path d="M1.100 9A7 7 0 0 1 14.900 7c.300 2-1 3.200-2.800 3.200-1.500 0-2.200-.700-2.100-1.500.100-.700-.500-2-2.200-2-2 0-3.300 1.700-3 4-1.500.300-3-.500-3.700-1.700z" fill="#3cc8a6"/><path d="M4.800 10.700c-.300-2.300 1-4 3-4 1.700 0 2.300 1.300 2.200 2 0 .300-.100.500-.200.700-1.300.300-2 .900-1.800 2.100.200 1.300 1.500 2.500 3.500 2.200A7 7 0 0 1 1.100 9c.700 1.200 2.200 2 3.700 1.700z" fill="#0c59a4"/><path d="M9.800 9.400c-.400 1 .300 2 1.800 2 1.200 0 2.300-.600 3-1.500" fill="none" stroke="#f2f2f2" stroke-width="1.300"/></svg><span class="lb" style="letter-spacing:-0.233px">Edge</span></div></div>
<div class="a" id="frame"></div>
</body>
</html>
